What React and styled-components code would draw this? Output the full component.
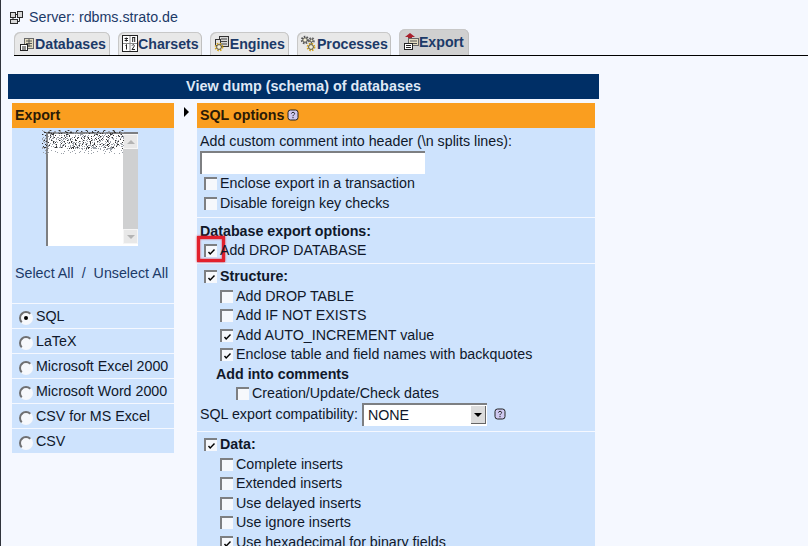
import React from "react";
import styled, { createGlobalStyle } from "styled-components";

const GlobalStyle = createGlobalStyle`
  html, body {
    margin: 0;
    padding: 0;
    background: #f5f8ff;
    font-family: "Liberation Sans", Arial, sans-serif;
    font-size: 14.25px;
    color: #10182a;
  }
`;

const Page = styled.div`
  width: 808px;
  height: 546px;
  overflow: hidden;
  box-sizing: border-box;
  border-left: 1px solid #30343c;
  padding: 8px 0 0 7px;
`;

const ServerLine = styled.div`
  display: flex;
  align-items: center;
  gap: 5px;
  height: 18px;
  padding-left: 1px;
  color: #1c3a68;
`;

const TabBar = styled.div`
  display: flex;
  align-items: flex-end;
  gap: 8px;
  height: 29px;
  margin-left: 6px;
  border-bottom: 1px solid #000;
`;

const Tab = styled.div`
  display: flex;
  align-items: center;
  box-sizing: border-box;
  height: ${(p) => (p.$active ? 26 : 23)}px;
  padding: 0 ${(p) => p.$right}px 0 ${(p) => p.$left}px;
  background: ${(p) => (p.$active ? "#d0d0d0" : "#e8e8e8")};
  border-radius: 6px 6px 0 0;
  box-shadow: inset 1px 1px 0 #c8c8c8, inset -1px 0 0 #c0c0c0;
  font-weight: bold;
  font-size: 14.2px;
  color: #1c3a68;
`;

const TitleBar = styled.div`
  width: 591px;
  height: 25px;
  margin-top: 18px;
  padding-bottom: 2px;
  box-sizing: border-box;
  background: #002f66;
  color: #dfe8f6;
  font-weight: bold;
  font-size: 14.4px;
  display: flex;
  align-items: center;
  justify-content: center;
`;

const Columns = styled.div`
  display: flex;
  width: 591px;
  margin-top: 4px;
  padding-left: 4px;
  box-sizing: border-box;
`;

const LeftCol = styled.div`
  width: 162px;
  flex: none;
`;

const Arrow = styled.div`
  width: 23px;
  flex: none;
  display: flex;
  justify-content: center;
  padding-top: 4px;
  padding-left: 1px;
  box-sizing: border-box;

  &::before {
    content: "";
    display: block;
    height: 0;
    border-left: 5px solid #000;
    border-top: 5px solid transparent;
    border-bottom: 5px solid transparent;
  }
`;

const RightCol = styled.div`
  width: 398px;
  flex: none;
`;

const Heading = styled.div`
  display: flex;
  align-items: center;
  gap: 1px;
  height: 25px;
  padding: 0 0 1px 3px;
  box-sizing: border-box;
  background: #fa9e1f;
  color: #2a1a06;
  font-weight: bold;
`;

const ListArea = styled.div`
  background: #cee3fd;
  height: 175px;
  box-sizing: border-box;
  padding-top: 4px;
`;

const ListBox = styled.div`
  position: relative;
  display: flex;
  justify-content: flex-end;
  width: 92px;
  height: 114px;
  margin-left: 34px;
  box-sizing: border-box;
  border-left: 2px solid #7d7f82;
  border-top: 2px solid #7d7f82;
  background: #fff;
`;

const ListNoise = styled.div`
  position: absolute;
  left: -6px;
  top: -4px;
`;

const Track = styled.div`
  width: 15px;
  height: 110px;
  display: flex;
  flex-direction: column;
  justify-content: space-between;
  background: #cfd0d1;
`;

const ScrollButton = styled.div`
  height: 15px;
  background: #e8e8e8;
  border: 1px solid #f6f6f6;
  box-sizing: border-box;
  display: flex;
  align-items: center;
  justify-content: center;

  &::before {
    content: "";
    border-left: 4px solid transparent;
    border-right: 4px solid transparent;
    border-${(p) => (p.$up ? "bottom" : "top")}: 4px solid #b4b4b4;
  }
`;

const SelectLinks = styled.div`
  display: flex;
  gap: 8px;
  padding: 19px 0 0 3px;
  color: #1c3a68;
`;

const RadioRow = styled.div`
  display: flex;
  align-items: center;
  gap: 3px;
  height: 24px;
  margin-top: 1px;
  padding-left: 7px;
  background: #cee3fd;
`;

const Radio = styled.span`
  display: block;
  position: relative;
  width: 14px;
  height: 14px;
  margin-top: 4px;
  box-sizing: border-box;
  border-radius: 50%;
  border: 2px solid;
  border-color: #6f7072 transparent transparent #6f7072;
  background: #f6f8fc;

  ${(p) =>
    p.$checked &&
    `&::after {
      content: "";
      position: absolute;
      left: 3px;
      top: 3px;
      width: 4px;
      height: 4px;
      border-radius: 50%;
      background: #000;
    }`}
`;

const Section = styled.div`
  background: #cee3fd;
  margin-top: ${(p) => (p.$first ? 0 : 1)}px;
  padding: ${(p) => p.$pad};
`;

const Row = styled.div`
  display: flex;
  align-items: center;
  height: 19.5px;
  gap: 3px;
  padding-left: ${(p) => 7 + (p.$indent || 0)}px;
`;

const PlainRow = styled(Row)`
  padding-left: ${(p) => 3 + (p.$indent || 0)}px;
  font-weight: ${(p) => (p.$bold ? "bold" : "normal")};
`;

const CompatRow = styled(PlainRow)`
  height: 22px;
`;

const TextInput = styled.div`
  width: 225px;
  height: 23px;
  margin-left: 3px;
  box-sizing: border-box;
  background: #fff;
  border-left: 2px solid #7d7f82;
  border-top: 2px solid #7d7f82;
`;

const Check = styled.span`
  position: relative;
  display: block;
  width: 13px;
  height: 13px;
  flex: none;
  margin-top: 1px;
  box-sizing: border-box;
  border-left: 2px solid #7d7f82;
  border-top: 2px solid #7d7f82;
  background: #f6f8fc;
`;

const Tick = styled.svg`
  position: absolute;
  left: 1px;
  top: 2px;
`;

const Highlight = styled.span`
  position: relative;
  display: block;
  flex: none;

  &::after {
    content: "";
    position: absolute;
    left: -7px;
    top: -7px;
    width: 28px;
    height: 26px;
    box-sizing: border-box;
    border: 3px solid #e2202c;
    box-shadow: 0 0 2px #e2202c, inset 0 0 2px #e2202c;
  }
`;

const RowLabel = styled.span`
  position: relative;
  font-size: 14.1px;
`;

const Dropdown = styled.div`
  display: flex;
  align-items: center;
  justify-content: space-between;
  width: 125px;
  height: 23px;
  margin-left: 1px;
  box-sizing: border-box;
  padding: 0 0 0 4px;
  background: #fff;
  border-left: 2px solid #7d7f82;
  border-top: 2px solid #7d7f82;
`;

const DropButton = styled.span`
  width: 14px;
  height: 17px;
  margin-right: 1px;
  background: #dcdcdc;
  border-right: 1px solid #666;
  border-bottom: 1px solid #666;
  display: flex;
  align-items: center;
  justify-content: center;

  &::before {
    content: "";
    border-left: 4px solid transparent;
    border-right: 4px solid transparent;
    border-top: 4px solid #000;
  }
`;

const HelpWrap = styled.span`
  display: inline-flex;
  margin-left: ${(p) => p.$left || 0}px;
`;

const NoiseSvg = styled.svg`
  display: block;
`;

const Help = ({ left }) => (
  <HelpWrap $left={left}>
    <svg width="12" height="12" viewBox="0 0 12 12">
      <rect x="1" y="1" width="10" height="10" rx="2.5" fill="#cfc9f0" stroke="#222" strokeWidth="1" />
      <path d="M4.4 4.6C4.6 2.9 7.6 2.9 7.6 4.6C7.6 5.7 6 5.7 6 7.2" fill="none" stroke="#222" strokeWidth="1" />
      <rect x="5.5" y="8" width="1" height="1.2" fill="#222" />
    </svg>
  </HelpWrap>
);

const ServerIcon = () => (
  <svg width="15" height="15" viewBox="0 0 15 15">
    <g fill="#d8d8d8" stroke="#2a2a2a">
      <rect x="8.5" y="1.5" width="5" height="6" />
      <rect x="1.5" y="2.5" width="5" height="5" />
      <rect x="1.5" y="9.5" width="7" height="4" />
      <path d="M10.5 7.5V11.5H8.5M4 7.5V9.5M6.5 4.5H8.5" fill="none" />
    </g>
  </svg>
);

const DbIcon = () => (
  <svg width="15" height="16" viewBox="0 0 15 16">
    <rect x="4.5" y="2.5" width="9" height="10" fill="#e4dcc0" stroke="#6a6a6a" />
    <path d="M6 5h6M6 7.5h6M6 10h6M9 3v8" stroke="#555" />
    <rect x="0.5" y="8.5" width="7" height="6" fill="#fff" stroke="#222" />
    <path d="M2 11h4M2 13h4" stroke="#222" />
  </svg>
);

const CharsetIcon = () => (
  <svg width="16" height="17" viewBox="0 0 16 17">
    <rect x="0.5" y="0.5" width="15" height="16" fill="#fff" stroke="#222" />
    <path d="M8 1v15M1 8.5h14" stroke="#888" />
    <path d="M4.3 2.5v4M2.6 3.5h3.4M2.6 5.5h3.4M10.2 2.5h3M10.7 2.5v4.5M12.7 2.5v4.5M3.5 10.5l1-1v5M10 10.5c1-1.6 3-.8 2 1l-2 3h3" fill="none" stroke="#222" />
  </svg>
);

const Gear = ({ x, y, r, fill }) => (
  <g>
    <circle cx={x} cy={y} r={r} fill="none" stroke={fill} strokeWidth="2" strokeDasharray="1.5 1.2" />
    <circle cx={x} cy={y} r={r - 1} fill="#f4f0d8" stroke="#333" strokeWidth="0.8" />
  </g>
);

const EngineIcon = () => (
  <svg width="17" height="17" viewBox="0 0 17 17">
    <rect x="6.5" y="1.5" width="9" height="10" fill="#d8d8d8" stroke="#333" />
    <path d="M8 4h6M8 6.5h6M8 9h6" stroke="#444" />
    <rect x="2.5" y="4.5" width="5" height="6" fill="#e0e0e0" stroke="#333" />
    <Gear x={6} y={12} r={3.4} fill="#d8a81c" />
  </svg>
);

const ProcessIcon = () => (
  <svg width="17" height="17" viewBox="0 0 17 17">
    <Gear x={5} y={5} r={3.2} fill="#555" />
    <Gear x={11.5} y={5.5} r={2.4} fill="#666" />
    <Gear x={11} y={12} r={3.4} fill="#d8a81c" />
  </svg>
);

const ExportIcon = () => (
  <svg width="15" height="18" viewBox="0 0 15 18">
    <path d="M6 0L11 4H8V8H4V4H1z" fill="#a8202c" />
    <rect x="4.5" y="5.5" width="10" height="7" fill="#e4dcc0" stroke="#666" />
    <path d="M6 8h7M6 10.5h7" stroke="#555" />
    <rect x="0.5" y="10.5" width="8" height="6" fill="#fff" stroke="#222" />
    <path d="M2 12.5h5M2 14.5h5" stroke="#222" />
  </svg>
);

const NoiseText = () => {
  const dots = [];
  for (let y = 0; y < 24; y += 1) {
    for (let x = 0; x < 82; x += 1) {
      const n = (x * 7 + y * 13 + ((x * y) % 11) * 5 + (x ^ (y * 3))) % 9;
      const fade = y > 18 ? 1 : 3;
      if (n < fade) dots.push(<rect key={`${x}-${y}`} x={x} y={y} width="1" height="1" fill={n % 2 ? "#333" : "#9aa0a8"} />);
    }
  }
  return (
    <NoiseSvg width="82" height="24" viewBox="0 0 82 24">
      {dots}
    </NoiseSvg>
  );
};

const CheckBox = ({ checked }) => (
  <Check>
    {checked && (
      <Tick width="9" height="8" viewBox="0 0 9 8">
        <path d="M1.5 4L3.2 6L7.5 1.5" fill="none" stroke="#000" strokeWidth="1.4" />
      </Tick>
    )}
  </Check>
);

const Option = ({ label, checked, indent, bold }) => (
  <Row $indent={indent}>
    <CheckBox checked={checked} />
    {bold ? <b>{label}</b> : <span>{label}</span>}
  </Row>
);

const tabs = [
  { label: "Databases", icon: <DbIcon />, left: 6, right: 4 },
  { label: "Charsets", icon: <CharsetIcon />, left: 4, right: 3 },
  { label: "Engines", icon: <EngineIcon />, left: 3, right: 4 },
  { label: "Processes", icon: <ProcessIcon />, left: 3, right: 3 },
  { label: "Export", icon: <ExportIcon />, left: 5, right: 5, active: true },
];

const formats = ["SQL", "LaTeX", "Microsoft Excel 2000", "Microsoft Word 2000", "CSV for MS Excel", "CSV"];

export default function App() {
  return (
    <Page>
      <GlobalStyle />
      <ServerLine>
        <ServerIcon />
        <span>Server: rdbms.strato.de</span>
      </ServerLine>
      <TabBar>
        {tabs.map((t) => (
          <Tab key={t.label} $active={t.active} $left={t.left} $right={t.right}>
            {t.icon}
            {t.label}
          </Tab>
        ))}
      </TabBar>
      <TitleBar>View dump (schema) of databases</TitleBar>
      <Columns>
        <LeftCol>
          <Heading>Export</Heading>
          <ListArea>
            <ListBox>
              <ListNoise>
                <NoiseText />
              </ListNoise>
              <Track>
                <ScrollButton $up />
                <ScrollButton />
              </Track>
            </ListBox>
            <SelectLinks>
              <span>Select All</span>
              <span>/</span>
              <span>Unselect All</span>
            </SelectLinks>
          </ListArea>
          {formats.map((f, i) => (
            <RadioRow key={f}>
              <Radio $checked={i === 0} />
              <span>{f}</span>
            </RadioRow>
          ))}
        </LeftCol>
        <Arrow />
        <RightCol>
          <Heading>
            SQL options
            <Help left={2} />
          </Heading>
          <Section $first $pad="3px 0 4.5px">
            <PlainRow>Add custom comment into header (\n splits lines):</PlainRow>
            <TextInput />
            <Option label="Enclose export in a transaction" />
            <Option label="Disable foreign key checks" />
          </Section>
          <Section $pad="3px 0 3px">
            <PlainRow $bold>Database export options:</PlainRow>
            <Row>
              <Highlight>
                <CheckBox checked />
              </Highlight>
              <RowLabel>Add DROP DATABASE</RowLabel>
            </Row>
          </Section>
          <Section $pad="2.5px 0 6px">
            <Option label="Structure:" checked bold />
            <Option label="Add DROP TABLE" indent={16} />
            <Option label="Add IF NOT EXISTS" indent={16} />
            <Option label="Add AUTO_INCREMENT value" indent={16} checked />
            <Option label="Enclose table and field names with backquotes" indent={16} checked />
            <PlainRow $bold $indent={16}>Add into comments</PlainRow>
            <Option label="Creation/Update/Check dates" indent={32} />
            <CompatRow>
              <span>SQL export compatibility:</span>
              <Dropdown>
                NONE
                <DropButton />
              </Dropdown>
              <Help left={4} />
            </CompatRow>
          </Section>
          <Section $pad="2.5px 0 6px">
            <Option label="Data:" checked bold />
            <Option label="Complete inserts" indent={16} />
            <Option label="Extended inserts" indent={16} />
            <Option label="Use delayed inserts" indent={16} />
            <Option label="Use ignore inserts" indent={16} />
            <Option label="Use hexadecimal for binary fields" indent={16} checked />
          </Section>
        </RightCol>
      </Columns>
    </Page>
  );
}
